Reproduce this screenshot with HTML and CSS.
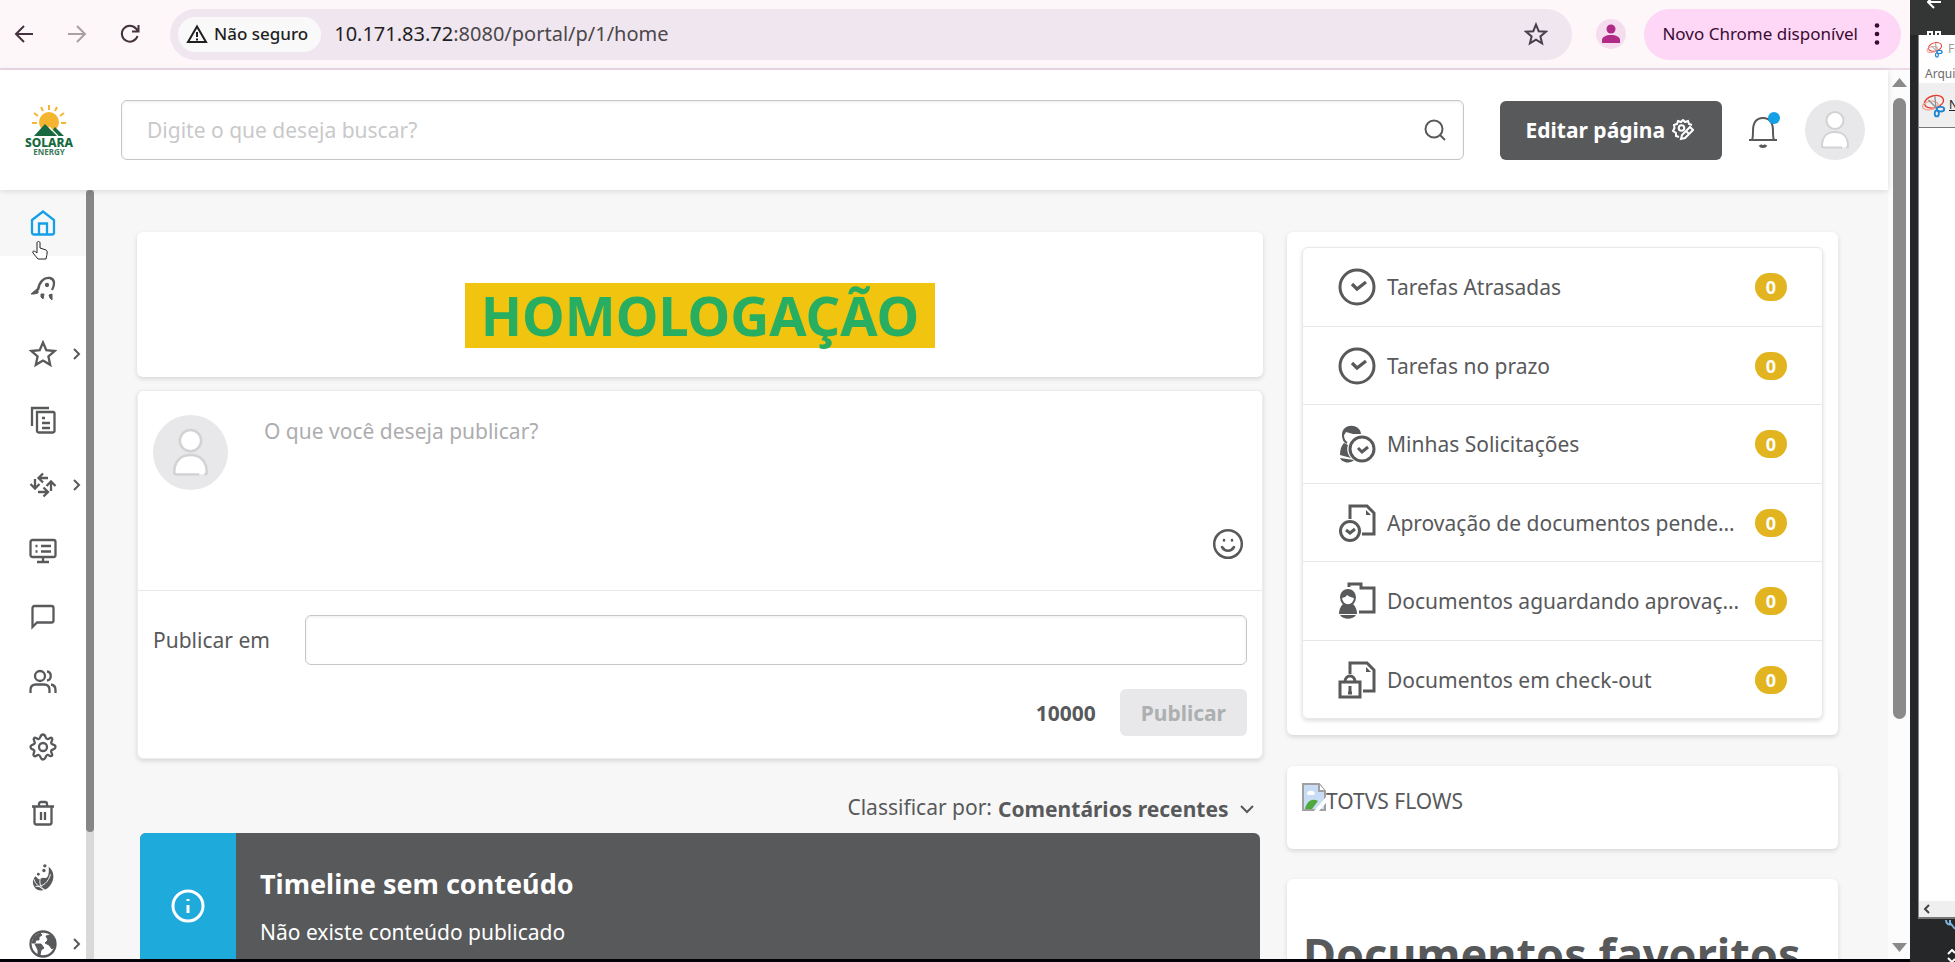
FILE: index.html
```html
<!DOCTYPE html>
<html lang="pt-BR">
<head>
    <meta charset="UTF-8">
    <title>Portal - Home</title>
    <meta name="viewport" content="width=device-width, initial-scale=1">
    <link rel="stylesheet" href="styles.css">
</head>
<body>
<svg class="sprite" width="0" height="0" aria-hidden="true">
    <symbol id="i-chevron" viewBox="0 0 12 14"><path d="M2 2l5 5-5 5"/></symbol>
    <symbol id="i-clock" viewBox="0 0 38 38"><circle cx="19" cy="19" r="17"/><path d="M14 16l5 5 9-7" stroke-width="3.2"/></symbol>
    <symbol id="i-user" viewBox="0 0 60 60"><circle cx="30" cy="20.500" r="8.500"/><path d="M17 46c0-9 5-14 13-14s13 5 13 14c0 1-1 1.500-2 1.500M37 47.500H19c-1.500 0-2-.5-2-1.500"/></symbol>
    <symbol id="i-snip" viewBox="0 0 28 26"><ellipse cx="14" cy="9" rx="10.500" ry="6.500" transform="rotate(-15 14 9)" fill="none" stroke="#e8392b" stroke-width="1.500"/><ellipse cx="10" cy="13" rx="8.500" ry="4.500" transform="rotate(-10 10 13)" fill="none" stroke="#f0a59c" stroke-width="1.500"/><path d="M8 7l9 9M15 3l1 13" stroke="#8e9397" stroke-width="1.500"/><ellipse cx="21" cy="17" rx="4" ry="2.500" fill="none" stroke="#1f86d2" stroke-width="2"/><ellipse cx="17" cy="21.500" rx="2.200" ry="3.200" fill="none" stroke="#1f86d2" stroke-width="2"/></symbol>
</svg>

<div class="screen">
    <div class="browser">
        <div class="toolbar">
            <button class="tool" aria-label="Voltar"><svg width="20" height="20" viewBox="0 0 20 20"><path d="M19 10H2M10 2l-8 8 8 8"/></svg></button>
            <button class="tool tool-off" aria-label="Avançar"><svg width="20" height="20" viewBox="0 0 20 20"><path d="M1 10h17M10 2l8 8-8 8"/></svg></button>
            <button class="tool" aria-label="Recarregar"><svg width="20" height="20" viewBox="0 0 20 20"><path d="M17.500 12A8 8 0 1 1 16 4.500l2 2.500M18.500 1v6.500H12"/></svg></button>
            <div class="address">
                <button class="insecure">
                    <svg width="22" height="20" viewBox="0 0 22 20"><path d="M11 2.500L2 18h18z"/><path d="M11 8v5M11 14.500v2"/></svg>
                    Não seguro
                </button>
                <div class="url"><span>10.171.83.72</span>:8080/portal/p/1/home</div>
                <button class="fav" aria-label="Favoritar"><svg width="24" height="24" viewBox="0 0 24 24"><path d="M12 2.500l2.700 6.700 7.200.5-5.500 4.700 1.700 7-6.100-3.800-6.100 3.800 1.700-7L2.100 9.700l7.200-.5z"/></svg></button>
            </div>
            <button class="profile" aria-label="Perfil"><svg width="20" height="20" viewBox="0 0 20 20"><circle cx="10" cy="5" r="4.500"/><path d="M1 19v-3c0-3 4-5 9-5s9 2 9 5v3z"/></svg></button>
            <button class="update">Novo Chrome disponível
                <svg width="6" height="24" viewBox="0 0 6 24"><circle cx="3" cy="3.500" r="2.300"/><circle cx="3" cy="12" r="2.300"/><circle cx="3" cy="20.500" r="2.300"/></svg>
            </button>
        </div>

        <div class="page">
            <div class="content">
                <header class="header">
                    <a class="logo" href="#" aria-label="Solara Energy">
                        <svg width="54" height="52" viewBox="0 0 54 52">
                            <circle cx="27" cy="18" r="10" fill="#f5b531"/>
                            <path d="M27 1v5M19 3l2 4M35 3l-2 4M12 9l4 3M42 9l-4 3M10 19h5M39 19h5" stroke="#f5b531" stroke-width="2"/>
                            <path d="M12 32l11-12 7 7 3-4 9 9z" fill="#17693f"/>
                            <path d="M27 23l9 9" stroke="#fff" stroke-width="1.200"/>
                            <text x="27" y="43" text-anchor="middle" class="logo-name">SOLARA</text>
                            <text x="27" y="51" text-anchor="middle" class="logo-sub">ENERGY</text>
                        </svg>
                    </a>
                    <label class="search">
                        <input type="text" placeholder="Digite o que deseja buscar?" aria-label="Buscar">
                        <svg width="24" height="24" viewBox="0 0 24 24"><circle cx="11" cy="11" r="8.500"/><path d="M17 17l5 5"/></svg>
                    </label>
                    <button class="edit">Editar página
                        <svg width="22" height="22" viewBox="0 0 22 22"><path d="M7 18l-3-1 0-3-3-2 1.500-3L2 6l3-1 1-3 3 1 2-2 2 2 3-1 1 3 3 1"/><circle cx="9.500" cy="9" r="2.800"/><path d="M9 20l1-4 8-8 3 3-8 8zM14 12l3 3"/></svg>
                    </button>
                    <button class="bell" aria-label="Notificações">
                        <svg width="32" height="36" viewBox="0 0 32 36"><path d="M2 28h28M5 28c1-2 1-4 1-9 0-9 4-13 10-13s10 4 10 13c0 5 0 7 1 9"/><path d="M13 33c1 2 5 2 6 0" stroke-width="3"/></svg>
                        <span class="dot"></span>
                    </button>
                    <button class="avatar" aria-label="Minha conta"><svg width="60" height="60"><use href="#i-user"/></svg></button>
                </header>

                <div class="body">
                    <div class="rail">
                        <nav class="menu">
                            <a href="#" class="active" aria-label="Home"><svg class="ico" viewBox="0 0 28 28"><path d="M3 11L14 2.500 25 11v12.500a2 2 0 0 1-2 2H5a2 2 0 0 1-2-2zM10 25V14.500h8V25"/></svg></a>
                            <a href="#" aria-label="Primeiros passos"><svg class="ico" viewBox="0 0 28 28"><path d="M9 15C10 7 15 2 21 3c5 1 5 7 2 12"/><path d="M2 19l7-6 0 5-4 1zM12 19l3 0-1 5-2-2zM20 20l3-1 0 6-2-2z" fill="#58595b" stroke-width="1"/><circle cx="18" cy="10" r="1"/></svg></a>
                            <a href="#" aria-label="Favoritos"><svg class="ico" viewBox="0 0 28 28"><path d="M14 2.500l3.300 7.700 8.300.8-6.200 5.500 1.800 8.300-7.200-4.300-7.200 4.300 1.800-8.300L2.400 11l8.300-.8z"/></svg><svg class="more"><use href="#i-chevron"/></svg></a>
                            <a href="#" aria-label="Documentos"><svg class="ico" viewBox="0 0 28 28"><path d="M3 20V2h17M8 6h16a1.500 1.500 0 0 1 1.500 1.500V25a1.500 1.500 0 0 1-1.500 1.500H9.500A1.500 1.500 0 0 1 8 25zM13 12h3M13 17h8M13 22h8"/></svg></a>
                            <a href="#" aria-label="Processos"><svg class="ico" viewBox="0 0 28 28"><path d="M10 7h9M14 2.500L9.500 7l4.500 4.500M6 8v9M1.500 13L6 17.500l4.500-4.500M9 21h10M14.500 16.500L19 21l-4.500 4.500M22 20v-9M17.500 15L22 10.500l4.500 4.500"/></svg><svg class="more"><use href="#i-chevron"/></svg></a>
                            <a href="#" aria-label="Painel"><svg class="ico" viewBox="0 0 28 28"><rect x="1.500" y="3" width="25" height="17" rx="2"/><path d="M14 20v5M8 25h12M6.500 9h2M12 9h10M6.500 14.500h2M12 14.500h10"/></svg></a>
                            <a href="#" aria-label="Mensagens"><svg class="ico" viewBox="0 0 28 28"><path d="M3.500 25V6a2 2 0 0 1 2-2h17a2 2 0 0 1 2 2v12.500a2 2 0 0 1-2 2H8z"/></svg></a>
                            <a href="#" aria-label="Comunidades"><svg class="ico" viewBox="0 0 28 28"><circle cx="11" cy="8" r="5"/><path d="M18 3.500c5 .5 5 8.500 0 9M1.500 25v-3c0-4 2-5.500 5.500-5.500h8c3.500 0 5.500 1.500 5.500 5.500v3M22 16.500c3 .5 4.500 2 4.500 5.500v3"/></svg></a>
                            <a href="#" aria-label="Configurações"><svg class="ico" viewBox="0 0 28 28"><path d="M14 1.500c3 0 2 4 4.200 4.500S21.500 3.500 23 5.200s-1.200 3-.8 5 4.300 1 4.300 3.800-3.400 2-4.300 3.800 2.200 3.500.8 5-3-1.300-4.800-.8-1.200 4.500-4.200 4.500-2-4-4.200-4.500-3 2.500-4.800.8.800-3 .3-5-3.800-1-3.800-3.800 3.800-2 4.300-3.800-2.200-3.300-.8-5 3 1.300 4.800.8S11 1.500 14 1.500z"/><circle cx="14" cy="14" r="4"/></svg></a>
                            <a href="#" aria-label="Lixeira"><svg class="ico" viewBox="0 0 28 28"><path d="M3 7.500h22M5.500 8v15.500a2 2 0 0 0 2 2h13a2 2 0 0 0 2-2V8M10 7V5a2 2 0 0 1 2-2h4a2 2 0 0 1 2 2v2M12 13v8M16 13v8"/></svg></a>
                            <a href="#" aria-label="Fluig"><svg class="ico solid" viewBox="0 0 28 30"><path d="M20 3c5 3 7 11 3 18-4 8-14 10-18 4-3-5-2-9 1-12l3 3c2 1 4-2 6-1 4 1 6-4 5-12z"/><path d="M4 16c2 6 6 9 12 12M22 11c-2 8-8 14-16 13M11 16c-1 4 0 9 5 12" class="cut"/><circle cx="16" cy="2" r="1.800"/><circle cx="15" cy="7" r="1.800"/><circle cx="9" cy="11" r="1.500"/></svg></a>
                            <a href="#" aria-label="Internacional"><svg class="ico" viewBox="0 0 28 28"><circle cx="14" cy="14" r="12.500"/><path d="M5 7l6-4 2 2-3 2 0 3-3 0-1 3-3 0zM17 6l5-1 4 6 0 5-3 3-3-4-4-2 3-3zM6 14l6 0 3 4-3 2-1 5-2 0 0-5z" fill="#58595b" stroke-width="1"/></svg><svg class="more"><use href="#i-chevron"/></svg></a>
                        </nav>
                        <div class="rail-bar"><span></span></div>
                        <svg class="cursor" width="18" height="20" viewBox="0 0 18 20"><path d="M6 11V3c0-2 3-2 3 0v5l6 2c2 1 1 4 0 9H7l-5-6c-1-2 1-3 4 0z"/></svg>
                    </div>

                    <main class="main">
                        <div class="col-left">
                            <section class="card banner"><h1>HOMOLOGAÇÃO</h1></section>

                            <form class="card post">
                                <div class="post-top">
                                    <span class="photo"><svg width="75" height="75"><use href="#i-user"/></svg></span>
                                    <textarea placeholder="O que você deseja publicar?" aria-label="Publicação"></textarea>
                                    <button type="button" class="emoji" aria-label="Emoji"><svg width="32" height="32" viewBox="0 0 32 32"><circle cx="16" cy="16" r="13.800"/><path d="M10 19c3 5 9 5 12 0"/><path d="M12 12v.5M20 12v.5"/></svg></button>
                                </div>
                                <div class="post-where">
                                    <label for="where">Publicar em</label>
                                    <input type="text" id="where">
                                </div>
                                <div class="post-actions">
                                    <strong>10000</strong>
                                    <button type="submit" disabled>Publicar</button>
                                </div>
                            </form>

                            <div class="sort">
                                <label for="sort">Classificar por:</label>
                                <select id="sort"><option>Comentários recentes</option></select>
                                <svg width="16" height="10" viewBox="0 0 16 10"><path d="M2 2l6 6 6-6"/></svg>
                            </div>

                            <section class="empty">
                                <div class="empty-icon"><svg width="34" height="34" viewBox="0 0 34 34"><circle cx="17" cy="17" r="15"/><path d="M17 16v8M17 10v2"/></svg></div>
                                <div class="empty-text">
                                    <h2>Timeline sem conteúdo</h2>
                                    <p>Não existe conteúdo publicado</p>
                                </div>
                            </section>
                        </div>

                        <div class="col-right">
                            <section class="card tasks">
                                <ul>
                                    <li><a href="#"><svg class="tico"><use href="#i-clock"/></svg><span>Tarefas Atrasadas</span><b>0</b></a></li>
                                    <li><a href="#"><svg class="tico"><use href="#i-clock"/></svg><span>Tarefas no prazo</span><b>0</b></a></li>
                                    <li><a href="#"><svg class="tico" viewBox="0 0 38 38"><path d="M4 10C4-2 22-2 23 9l-8 0-7-2-3 5zM6 18l4 2c-2 5 0 10 3 13l-11-3c0-5 1-9 4-12zM2 33l14 2c-3 4-12 3-14-2z" class="fill"/><path d="M5 10c0 4 2 7 4 8" stroke-width="2"/><circle cx="24" cy="24" r="12"/><path d="M20 23l4 4 6-5"/></svg><span>Minhas Solicitações</span><b>0</b></a></li>
                                    <li><a href="#"><svg class="tico" viewBox="0 0 38 38"><path d="M12 15V2h17l7 7v21H24"/><path d="M28 6v5h5z" class="fill"/><circle cx="12" cy="27" r="9.500"/><path d="M8 26l4 3 5-4"/></svg><span>Aprovação de documentos pendentes</span><b>0</b></a></li>
                                    <li><a href="#"><svg class="tico" viewBox="0 0 38 38"><path d="M11 5V2h12v4h13v24H21"/><path d="M2 16c0-12 16-12 16 0-5 0-7-2-9-3-1 2-3 3-7 3zM5 22l5 2 5-2c3 3 4 6 4 10H1c0-4 1-7 4-10zM2 33h16c-3 5-13 5-16 0z" class="fill"/><path d="M3 15c0 11 14 11 14 0" stroke-width="2"/></svg><span>Documentos aguardando aprovação</span><b>0</b></a></li>
                                    <li><a href="#"><svg class="tico" viewBox="0 0 38 38"><path d="M12 13V2h17l7 7v21H25"/><path d="M28 6v5h5z" class="fill"/><rect x="2" y="21" width="20" height="15"/><path d="M7 21c0-8 10-8 10 0M12 25v8M10 32h4"/></svg><span>Documentos em check-out</span><b>0</b></a></li>
                                </ul>
                            </section>

                            <section class="card flows">
                                <svg width="24" height="28" viewBox="0 0 24 28">
                                    <path d="M1 1h16l6 7v19H1z" fill="#c8ddf5" stroke="#a0a0a0" stroke-width="2"/>
                                    <path d="M17 1v7h6" fill="#fff" stroke="#a0a0a0" stroke-width="2"/>
                                    <path d="M5 11c0-3 3-4 5-3 3 0 3 3 2 4H6z" fill="#fff" stroke="none"/>
                                    <path d="M3 26c2-9 8-11 13-8l-6 8z" fill="#4fa83d" stroke="none"/>
                                    <path d="M24 14L12 28h5l7-8z" fill="#fff" stroke="none"/>
                                </svg>
                                <span>TOTVS FLOWS</span>
                            </section>

                            <section class="card docs"><h2>Documentos favoritos</h2></section>
                        </div>
                    </main>
                </div>
            </div>
            <div class="scrollbar">
                <svg width="15" height="9" viewBox="0 0 15 9"><path d="M7.500 0L15 9H0z"/></svg>
                <div class="track"><span></span></div>
                <svg width="15" height="9" viewBox="0 0 15 9"><path d="M0 0h15L7.500 9z"/></svg>
            </div>
        </div>
    </div>

    <aside class="desktop">
        <div class="desktop-top">
            <svg width="14" height="10" viewBox="0 0 14 10"><path d="M1 2h13M6-3L1 2l6 6"/></svg>
            <svg width="14" height="4" viewBox="0 0 14 4"><path d="M1 4V1h4v3M9 4V1h4v3"/></svg>
        </div>
        <div class="snip">
            <div class="snip-title"><svg width="18" height="17"><use href="#i-snip"/></svg>Ferramenta</div>
            <div class="snip-menu">Arquivo</div>
            <div class="snip-new"><svg width="26" height="25"><use href="#i-snip"/></svg><u>N</u>ovo</div>
            <div class="snip-body"></div>
            <div class="snip-scroll"><svg width="8" height="10" viewBox="0 0 8 10"><path d="M6 1L2 5l4 4"/></svg></div>
        </div>
        <div class="desktop-foot">
            <svg width="10" height="12" viewBox="0 0 10 12"><path d="M1 1c0 4 3 5 5 4l4 5M5 1v4" stroke="#7db4dc"/></svg>
            <svg width="8" height="14" viewBox="0 0 8 14"><path d="M1 5l4-4 3 3M1 9l4 4 3-3"/></svg>
        </div>
    </aside>
</div>
</body>
</html>
```
FILE: styles.css
```css
* {
    box-sizing: border-box;
}
body {
    margin: 0;
    height: 100vh;
    overflow: hidden;
    background: #000207;
    color: #58595b;
    font-family: "Noto Sans", "Open Sans", sans-serif;
    font-size: 21px;
    line-height: 28px;
}
button, input, textarea, select {
    font: inherit;
    color: inherit;
}
button {
    border: 0;
    padding: 0;
    background: none;
    cursor: pointer;
}
h1, h2, p, ul {
    margin: 0;
    padding: 0;
}
a {
    color: inherit;
    text-decoration: none;
}
svg {
    flex-shrink: 0;
    fill: none;
    stroke: #58595b;
    stroke-width: 2;
}
.sprite {
    position: absolute;
}
.screen {
    display: flex;
    height: 100vh;
}
.browser {
    flex: 1;
    min-width: 0;
    display: flex;
    flex-direction: column;
    padding-bottom: 3px;
}

/* barra do navegador */
.toolbar {
    flex-shrink: 0;
    display: flex;
    align-items: center;
    height: 70px;
    padding: 0 9px 0 14px;
    background: #fdf7f9;
    border-bottom: 2px solid #eddae8;
}
.tool {
    display: flex;
    margin-right: 33px;
}
.tool svg {
    stroke: #45333f;
}
.tool-off svg {
    stroke: #a9a0a6;
}
.address {
    flex: 1;
    display: flex;
    align-items: center;
    height: 51px;
    margin-right: 24px;
    margin-left: -3px;
    padding: 0 24px 0 8px;
    border-radius: 26px;
    background: #f0e6ef;
}
.insecure {
    display: flex;
    align-items: center;
    gap: 6px;
    height: 35px;
    padding: 0 13px 0 8px;
    border-radius: 18px;
    background: #f9f9fa;
    color: #1f1f1f;
    font-size: 17px;
    font-weight: 500;
}
.insecure svg {
    stroke: #1f1f1f;
}
.url {
    flex: 1;
    margin-left: 13px;
    color: #4b474a;
    font-size: 20px;
}
.url span {
    color: #1f1f1f;
}
.fav {
    display: flex;
}
.fav svg {
    stroke: #45404a;
}
.profile {
    display: flex;
    justify-content: center;
    align-items: center;
    width: 30px;
    height: 30px;
    margin-right: 18px;
    border-radius: 50%;
    background: #f6dcef;
}
.profile svg {
    fill: #b02a86;
    stroke: none;
}
.update {
    display: flex;
    align-items: center;
    gap: 16px;
    height: 51px;
    padding: 0 21px 0 18px;
    border-radius: 26px;
    background: #fdd7f5;
    color: #3a0a32;
    font-size: 17px;
}
.update svg {
    fill: #3a0a32;
    stroke: none;
}

/* cabeçalho */
.page {
    flex: 1;
    min-height: 0;
    display: flex;
    background: #f7f7f7;
}
.content {
    flex: 1;
    min-width: 0;
    display: flex;
    flex-direction: column;
}
.header {
    flex-shrink: 0;
    display: flex;
    align-items: center;
    height: 120px;
    padding: 0 23px 0 22px;
    background: #fff;
    box-shadow: 0 1px 6px #0002;
    z-index: 1;
}
.logo {
    display: flex;
    margin-right: 45px;
}
.logo svg {
    stroke: none;
}
.logo-name {
    fill: #17693f;
    font-size: 12px;
    font-weight: 800;
}
.logo-sub {
    fill: #3c7a5a;
    font-size: 8px;
    font-weight: 700;
}
.search {
    flex: 1;
    display: flex;
    align-items: center;
    height: 60px;
    padding: 0 16px 0 25px;
    border: 1px solid #c6c6c8;
    border-radius: 6px;
    box-shadow: inset 0 1px 3px #0001;
}
.search input {
    flex: 1;
    border: 0;
    padding: 0;
    outline: 0;
    background: none;
}
.search input::placeholder {
    color: #c9c9cb;
    opacity: 1;
}
.edit {
    display: flex;
    align-items: center;
    gap: 7px;
    height: 59px;
    margin-left: 36px;
    padding: 0 28px 0 26px;
    border-radius: 6px;
    background: #58595b;
    color: #fff;
    font-weight: 700;
}
.edit svg {
    stroke: #fff;
}
.bell {
    position: relative;
    display: flex;
    margin: 0 26px 0 25px;
}
.bell .dot {
    position: absolute;
    top: 0;
    right: -1px;
    width: 12px;
    height: 12px;
    border-radius: 50%;
    background: #14a0e6;
}
.avatar, .photo {
    display: flex;
    flex-shrink: 0;
    border-radius: 50%;
    background: #e8e8ea;
}
.avatar svg, .photo svg {
    fill: #fff;
    stroke: #d2d2d4;
}

/* menu lateral */
.body {
    flex: 1;
    min-height: 0;
    display: flex;
}
.rail {
    position: relative;
    display: flex;
    width: 94px;
    overflow: hidden;
    background: #fff;
}
.menu {
    flex: 1;
}
.menu a {
    display: grid;
    grid-template-columns: 28px 12px;
    align-items: center;
    gap: 15px;
    height: 66px;
    padding-left: 29px;
}
.menu a:nth-child(even) {
    height: 65px;
}
.menu a.active {
    background: #f7f7f8;
}
.ico {
    width: 28px;
    height: 28px;
    stroke-width: 2.3;
}
.active .ico {
    stroke: #14a0e6;
}
.solid {
    fill: #58595b;
    stroke: none;
}
.solid .cut {
    fill: none;
    stroke: #fff;
    stroke-width: 1;
}
.more {
    width: 12px;
    height: 14px;
}
.rail-bar {
    width: 8px;
    background: #d9d9d9;
}
.rail-bar span {
    display: block;
    height: calc(100% - 127px);
    border-radius: 4px;
    background: #868686;
}
.cursor {
    position: absolute;
    top: 50px;
    left: 31px;
    fill: #fff;
    stroke: #222;
    stroke-width: 1;
}

/* conteúdo */
.main {
    flex: 1;
    min-width: 0;
    display: grid;
    grid-template-columns: minmax(0, 1126fr) minmax(0, 551fr);
    gap: 24px;
    padding: 42px 50px 0 43px;
    overflow: hidden;
}
.card {
    border-radius: 6px;
    background: #fff;
    box-shadow: 0 2px 5px #0002;
}
.banner {
    height: 145px;
    padding-top: 51px;
    text-align: center;
}
.banner h1 {
    display: inline-block;
    padding: 0 16px;
    background: #f1c40f;
    color: #27ae60;
    font-size: 54px;
    line-height: 65px;
}
.post {
    margin-top: 13px;
    border: 1px solid #ededed;
}
.post-top {
    display: flex;
    align-items: flex-start;
    height: 200px;
    padding: 24px 18px 0 15px;
    border-bottom: 1px solid #e8e8e8;
}
.post-top textarea {
    flex: 1;
    height: 150px;
    margin-left: 34px;
    padding: 2px;
    border: 0;
    outline: 0;
    resize: none;
}
.post-top textarea::placeholder {
    color: #adadaf;
    opacity: 1;
}
.emoji {
    display: flex;
    align-self: flex-end;
    margin-bottom: 30px;
}
.emoji svg {
    stroke-width: 2.5;
    stroke-linecap: round;
}
.post-where {
    display: flex;
    align-items: center;
    padding: 24px 15px 0;
}
.post-where label {
    width: 152px;
}
.post-where input {
    flex: 1;
    height: 50px;
    padding: 0 12px;
    border: 1px solid #c6c6c8;
    border-radius: 6px;
    box-shadow: inset 0 1px 3px #0001;
}
.post-actions {
    display: flex;
    justify-content: flex-end;
    align-items: center;
    gap: 24px;
    padding: 24px 15px 22px;
}
.post-actions button {
    height: 47px;
    padding: 0 21px;
    border-radius: 6px;
    background: #e8e8ea;
    color: #adb0b0;
    font-weight: 700;
}
.sort {
    display: flex;
    justify-content: flex-end;
    align-items: center;
    height: 74px;
    padding: 26px 8px 0 0;
}
.sort label {
    margin-right: 6px;
    padding-bottom: 4px;
}
.sort select {
    padding: 0;
    border: 0;
    outline: 0;
    appearance: none;
    background: none;
    font-weight: 700;
}
.sort svg {
    margin-left: 10px;
}
.empty {
    display: flex;
    height: 146px;
    margin: 0 3px;
    border-radius: 6px;
    overflow: hidden;
    background: #58595b;
    color: #fff;
}
.empty-icon {
    display: flex;
    align-items: center;
    justify-content: center;
    width: 96px;
    background: #1faadc;
}
.empty-icon svg {
    stroke: #fff;
    stroke-width: 3;
}
.empty-text {
    padding: 33px 24px;
}
.empty-text h2 {
    margin-bottom: 16px;
    font-size: 27px;
    line-height: 36px;
}

/* coluna direita */
.tasks {
    padding: 15px 15px 16px;
}
.tasks ul {
    list-style: none;
    border: 1px solid #e8e8e8;
    border-radius: 6px;
    box-shadow: 0 2px 4px #0002;
}
.tasks li + li {
    border-top: 1px solid #e6e6e6;
}
.tasks a {
    display: flex;
    align-items: center;
    height: 78px;
    padding: 0 35px;
}
.tasks li:nth-child(even) a {
    height: 77px;
}
.tico {
    width: 38px;
    height: 38px;
    margin-right: 11px;
    stroke-width: 3;
}
.tico .fill {
    fill: #58595b;
    stroke: none;
}
.tasks span {
    flex: 1;
    overflow: hidden;
    text-overflow: ellipsis;
    white-space: nowrap;
}
.tasks b {
    width: 32px;
    margin-left: 12px;
    border-radius: 14px;
    background: #e2b41f;
    color: #fff;
    font-size: 18px;
    text-align: center;
}
.flows {
    display: flex;
    height: 83px;
    margin-top: 31px;
    padding: 17px 15px;
}
.flows span {
    padding-top: 4px;
}
.docs {
    height: 160px;
    margin-top: 30px;
    padding: 42px 16px;
}
.docs h2 {
    font-size: 45px;
    line-height: 65px;
    white-space: nowrap;
}

/* barra de rolagem */
.scrollbar {
    display: flex;
    flex-direction: column;
    align-items: center;
    width: 22px;
    padding: 8px 0 7px;
    background: #fcfcfc;
}
.scrollbar svg {
    fill: #8a8a8a;
    stroke: none;
}
.track {
    flex: 1;
    padding: 11px 0;
}
.track span {
    display: block;
    width: 13px;
    height: calc(100% - 213px);
    border-radius: 7px;
    background: #8a8a8a;
}

/* janela ao lado do navegador */
.desktop {
    display: flex;
    flex-direction: column;
    width: 45px;
    overflow: hidden;
    background: #262728;
}
.desktop-top {
    display: flex;
    flex-direction: column;
    justify-content: space-between;
    height: 35px;
    padding-left: 17px;
    background: #343535;
}
.desktop svg {
    stroke: #fff;
}
.snip {
    flex: 1;
    display: flex;
    flex-direction: column;
    margin-left: 8px;
    border-left: 1px solid #888;
    border-bottom: 2px solid #777;
    background: #fff;
    color: #6d6d6d;
    font-size: 12px;
    white-space: nowrap;
}
.snip-title, .snip-new, .snip-scroll {
    display: flex;
    align-items: center;
}
.snip-title {
    height: 28px;
    gap: 4px;
    padding-left: 7px;
    color: #999;
}
.snip-menu {
    height: 20px;
    padding-left: 6px;
    line-height: 22px;
}
.snip-new {
    height: 45px;
    gap: 2px;
    padding-left: 2px;
    border-bottom: 1px solid #777;
    background: #efefef;
    color: #222;
}
.snip-body {
    flex: 1;
}
.snip-scroll {
    height: 16px;
    padding-left: 4px;
    background: #efefef;
}
.snip-scroll svg {
    stroke: #444;
}
.desktop-foot {
    display: flex;
    flex-direction: column;
    align-items: flex-end;
    gap: 18px;
    height: 43px;
}
```
